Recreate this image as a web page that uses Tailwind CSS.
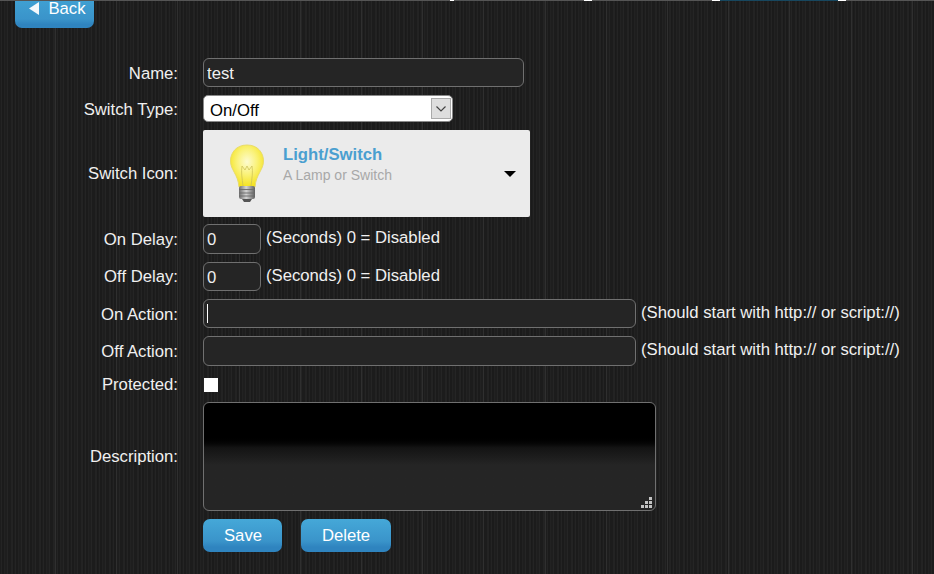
<!DOCTYPE html>
<html lang="en">
<head>
    <meta charset="UTF-8">
    <title>Edit Switch</title>
    <script src="https://cdn.jsdelivr.net/npm/@tailwindcss/browser@4"></script>
</head>
<body class="bg-[#1e1e1e] font-['Liberation_Sans',Arial,sans-serif] text-[16.7px] text-[#f0f0f0]">
<div class="relative h-[574px] w-[934px] overflow-hidden bg-[#1f1f1f] bg-[repeating-linear-gradient(90deg,transparent_0px,transparent_55px,#2f2f2f_55px,#2f2f2f_56px,transparent_56px,transparent_61.2px),repeating-linear-gradient(90deg,#1d1d1d_0px,#1d1d1d_1px,#242424_1px,#242424_2px,#1b1b1b_2px,#1b1b1b_4px,#222222_4px,#222222_5px,#1e1e1e_5px,#1e1e1e_7px,#252525_7px,#252525_8px,#1c1c1c_8px,#1c1c1c_11px,#232323_11px,#232323_13px,#1a1a1a_13px,#1a1a1a_14px)]">

    <!-- top strip of the page behind the form -->
    <div class="absolute top-0 left-0 flex h-px w-full bg-[#555]">
        <span class="ml-[450px] w-[4px] bg-white"></span>
        <span class="ml-[130px] w-[8px] bg-white"></span>
        <span class="ml-[120px] w-[8px] bg-white"></span>
        <span class="w-[118px] bg-[#17475f]"></span>
        <span class="w-[8px] bg-white"></span>
    </div>

    <div class="flex h-[28px] pl-[15px]">
        <button class="-mt-[8px] flex h-[36px] w-[79px] items-center justify-center gap-[9px] rounded-[7px] bg-linear-to-b from-[#42a5d6] from-0% via-[#3a94ca] via-75% to-[#2f84bf] to-90% pb-[3px] pl-[6px] text-white">
            <svg width="10" height="13" viewBox="0 0 10 13"><path d="M0 6.500 10 0v13z" fill="#f4f8fb"/></svg>
            <span>Back</span>
        </button>
    </div>

    <form class="mt-[30px] flex flex-col">
        <div class="flex h-[29px] items-center">
            <label class="w-[178px] pt-[2px] text-right">Name:</label>
            <input value="test" class="ml-[25px] h-full w-[321px] rounded-[6px] border border-[#707070] bg-[#252525] px-[3px] pt-[2px] text-[#f0f0f0]">
        </div>

        <div class="mt-[8px] flex h-[27px] items-center">
            <label class="w-[178px] pt-[2px] text-right">Switch Type:</label>
            <div class="relative ml-[25px] h-full w-[250px]">
                <select class="h-full w-full appearance-none rounded-[5px] border border-[#8a8a8a] bg-white pt-[2px] pl-[6px] text-black">
                    <option>On/Off</option>
                </select>
                <span class="absolute top-[3px] right-[2px] flex h-[21px] w-[20px] items-center justify-center border border-[#aaa] bg-[#dedede]">
                    <svg width="10" height="6" viewBox="0 0 10 6"><path d="M.5.500 5 5 9.500.500" fill="none" stroke="#444" stroke-width="1.200"/></svg>
                </span>
            </div>
        </div>

        <div class="mt-[8px] flex h-[87px] items-center">
            <label class="w-[178px] text-right">Switch Icon:</label>
            <div class="ml-[25px] flex h-full w-[327px] items-center rounded-[2px] bg-[#ebebeb] pl-[20px]">
                <svg width="48" height="62" viewBox="0 0 48 62" class="-mt-[2px] shrink-0">
                    <defs>
                        <radialGradient id="glass" cx="0.5" cy="0.4" r="0.6">
                            <stop offset="0" stop-color="#fdfbd0"/>
                            <stop offset="0.5" stop-color="#faf27a"/>
                            <stop offset="1" stop-color="#f4e21c"/>
                        </radialGradient>
                        <linearGradient id="screw" x1="0" y1="0" x2="1" y2="0">
                            <stop offset="0" stop-color="#6e6e6e"/>
                            <stop offset="0.45" stop-color="#d4d4d4"/>
                            <stop offset="1" stop-color="#5f5f5f"/>
                        </linearGradient>
                    </defs>
                    <path d="M24 3C13 3 7.500 11 7.500 19c0 9 7.500 13 8.500 26h16c1-13 8.500-17 8.500-26C40.500 11 35 3 24 3z" fill="url(#glass)" stroke="#e9dc6a" stroke-width="1"/>
                    <path d="M20 44c-1-8-2-14-1-20M28 44c1-8 2-14 1-20M19 24l3 4 2-4 2 4 3-4" fill="none" stroke="#c9bd55" stroke-width=".7"/>
                    <rect x="16" y="44" width="16" height="13" rx="2" fill="url(#screw)"/>
                    <path d="M16 47.500h16M16 51h16M16 54h16" stroke="#6a6a6a" stroke-width=".9"/>
                    <path d="M19 57h10l-2 3h-6z" fill="#555"/>
                </svg>
                <div class="-mt-[18px] ml-[12px] flex-1">
                    <div class="leading-[20px] font-bold text-[#4a9fd0]">Light/Switch</div>
                    <div class="text-[14px] leading-[20px] text-[#a8a8a8]">A Lamp or Switch</div>
                </div>
                <svg width="12" height="6" viewBox="0 0 12 6" class="mr-[14px]"><path d="M0 0h12L6 6z" fill="#000"/></svg>
            </div>
        </div>

        <div class="mt-[7px] flex h-[30px] items-center">
            <label class="w-[178px] pt-[2px] text-right">On Delay:</label>
            <input value="0" class="ml-[25px] h-full w-[58px] rounded-[6px] border border-[#707070] bg-[#252525] px-[3px] pt-[2px] text-[#f0f0f0]">
            <span class="ml-[5px] -mt-[2px]">(Seconds) 0 = Disabled</span>
        </div>

        <div class="mt-[8px] flex h-[29px] items-center">
            <label class="w-[178px] text-right">Off Delay:</label>
            <input value="0" class="ml-[25px] h-full w-[58px] rounded-[6px] border border-[#707070] bg-[#252525] px-[3px] pt-[2px] text-[#f0f0f0]">
            <span class="ml-[5px] -mt-[2px]">(Seconds) 0 = Disabled</span>
        </div>

        <div class="mt-[8px] flex h-[29px] items-center">
            <label class="w-[178px] pt-[2px] text-right">On Action:</label>
            <div class="relative ml-[25px] h-full w-[433px]">
                <input class="h-full w-full rounded-[6px] border border-[#707070] bg-[#252525] px-[3px] text-[#f0f0f0]">
                <span class="absolute top-[5px] left-[4px] h-[19px] w-px bg-white"></span>
            </div>
            <span class="ml-[5px] -mt-[2px]">(Should start with http:// or script://)</span>
        </div>

        <div class="mt-[8px] flex h-[30px] items-center">
            <label class="w-[178px] pt-[2px] text-right">Off Action:</label>
            <input class="ml-[25px] h-full w-[433px] rounded-[6px] border border-[#707070] bg-[#252525] px-[3px] text-[#f0f0f0]">
            <span class="ml-[5px] -mt-[2px]">(Should start with http:// or script://)</span>
        </div>

        <div class="mt-[12px] flex h-[14px] items-center">
            <label class="w-[178px] text-right">Protected:</label>
            <input type="checkbox" class="ml-[26px] h-[14px] w-[14px] appearance-none bg-white">
        </div>

        <div class="mt-[10px] flex h-[109px] items-center">
            <label class="w-[178px] text-right">Description:</label>
            <div class="relative ml-[25px] h-full w-[453px]">
                <textarea class="block h-full w-full resize-none rounded-[6px] border border-[#707070] bg-linear-to-b from-black from-30% via-[#141414] via-42% to-[#252525] to-58%"></textarea>
                <svg width="12" height="12" viewBox="0 0 12 12" class="absolute right-[3px] bottom-[2px]" fill="#c4c4c4">
                    <rect x="8" y="0" width="3" height="3"/>
                    <rect x="4" y="4" width="3" height="3"/><rect x="8" y="4" width="3" height="3"/>
                    <rect x="0" y="8" width="3" height="3"/><rect x="4" y="8" width="3" height="3"/><rect x="8" y="8" width="3" height="3"/>
                </svg>
            </div>
        </div>

        <div class="mt-[8px] ml-[203px] flex h-[33px] gap-[19px]">
            <button type="button" class="w-[79px] rounded-[7px] bg-linear-to-b from-[#45a8d8] from-0% via-[#3a94ca] via-67% to-[#2f84bf] to-85% pl-[1px] text-white">Save</button>
            <button type="button" class="w-[90px] rounded-[7px] bg-linear-to-b from-[#45a8d8] from-0% via-[#3a94ca] via-67% to-[#2f84bf] to-85% text-white">Delete</button>
        </div>
    </form>
</div>
</body>
</html>
